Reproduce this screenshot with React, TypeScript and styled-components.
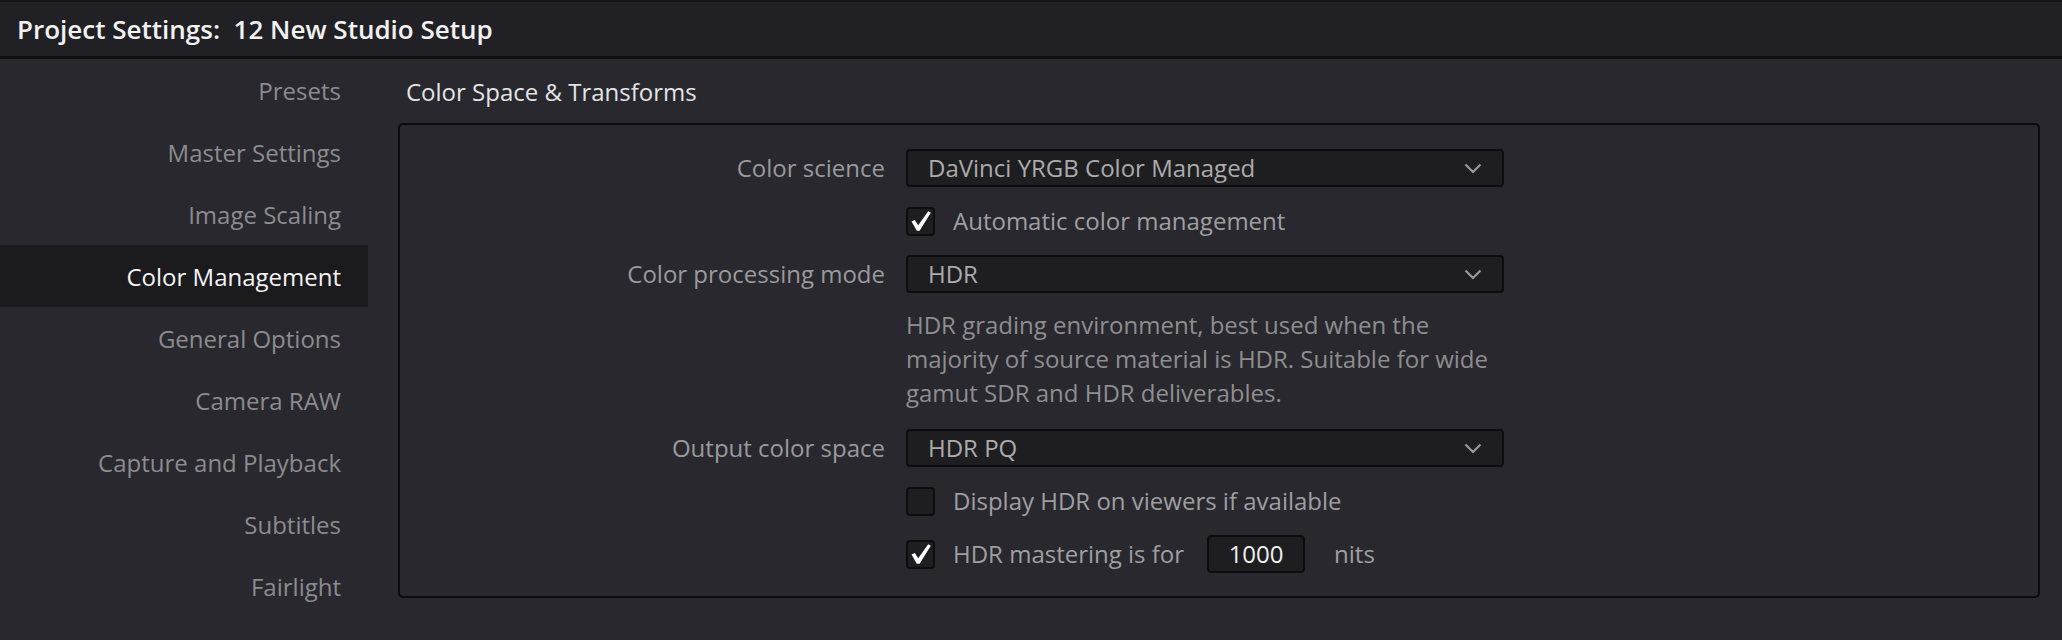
import styled, { createGlobalStyle } from 'styled-components'

const GlobalStyle = createGlobalStyle`
    html, body {
        margin: 0;
        padding: 0;
        background: #28282e;
    }
    body {
        font-family: 'Open Sans', 'Noto Sans', sans-serif;
        -webkit-font-smoothing: antialiased;
    }
`

const Window = styled.div`
    width: 2062px;
    height: 640px;
    overflow: hidden;
    display: flex;
    flex-direction: column;
    background: #28282e;
`

const TitleBar = styled.div`
    height: 54px;
    flex-shrink: 0;
    display: flex;
    align-items: center;
    padding-left: 17px;
    background: #212125;
    border-top: 2px solid #141416;
    border-bottom: 3px solid #0e0e10;
    color: #f2f2f2;
    font-size: 26px;
    font-weight: 600;
    white-space: pre;
`

const Body = styled.div`
    display: flex;
    flex: 1;
    min-height: 0;
`

const Sidebar = styled.nav`
    width: 368px;
    flex-shrink: 0;
    display: flex;
    flex-direction: column;
`

const NavItem = styled.div<{ active?: boolean }>`
    height: 62px;
    display: flex;
    align-items: center;
    justify-content: flex-end;
    padding-right: 27px;
    font-size: 24px;
    color: ${({ active }) => (active ? '#f4f4f4' : '#8c8c8e')};
    background: ${({ active }) => (active ? '#1b1b1e' : 'transparent')};
`

const Content = styled.main`
    flex: 1;
    padding: 0 22px 0 30px;
    display: flex;
    flex-direction: column;
`

const SectionTitle = styled.div<{ spaced?: boolean }>`
    height: ${({ spaced }) => (spaced ? '62px' : '64px')};
    flex-shrink: 0;
    display: flex;
    align-items: center;
    padding-left: 8px;
    margin-top: ${({ spaced }) => (spaced ? '21px' : '0')};
    font-size: 24px;
    color: #e4e4e6;
`

const Panel = styled.section`
    flex-shrink: 0;
    border: 2px solid #0b0b0d;
    border-radius: 5px;
    padding: 24px 0 23px;
    display: flex;
    flex-direction: column;
    gap: 19px;
`

const Row = styled.div`
    display: grid;
    grid-template-columns: 485px 598px;
    column-gap: 21px;
    align-items: center;
`

const Label = styled.div`
    text-align: right;
    font-size: 24px;
    line-height: 30px;
    color: #9a9a9c;
    white-space: nowrap;
`

const Select = styled.div`
    height: 34px;
    display: flex;
    align-items: center;
    justify-content: space-between;
    padding: 0 20px 0 20px;
    background: #1e1e20;
    border: 2px solid #0d0d0f;
    border-radius: 4px;
    font-size: 24px;
    line-height: 30px;
    color: #ababad;
`

const Check = styled.label`
    display: flex;
    align-items: center;
    gap: 18px;
    font-size: 24px;
    line-height: 30px;
    color: #9f9fa1;
    white-space: nowrap;
`

const Box = styled.span`
    width: 25px;
    height: 25px;
    flex-shrink: 0;
    display: flex;
    align-items: center;
    justify-content: center;
    background: #1e1e20;
    border: 2px solid #0d0d0f;
    border-radius: 4px;
`

const Note = styled.p`
    margin: -4px 0 0;
    font-size: 24px;
    line-height: 34px;
    color: #8e8e90;
`

const NumberField = styled.span`
    width: 94px;
    height: 34px;
    margin-left: 5px;
    display: flex;
    align-items: center;
    justify-content: center;
    background: #1e1e20;
    border: 2px solid #0d0d0f;
    border-radius: 4px;
    color: #f0f0f0;
    font-size: 24px;
`

const Unit = styled.span`
    margin-left: 11px;
`

const Chevron = () => (
    <svg width="18" height="11" viewBox="0 0 18 11">
        <path d="M1.5 1.5 L9 9 L16.5 1.5" fill="none" stroke="#9a9a9c" strokeWidth="2.2" />
    </svg>
)

const Tick = () => (
    <svg width="23" height="23" viewBox="0 0 23 23">
        <path d="M2.5 11.5 L5.8 10 L9.2 15.2 L19.2 1.2 L21.8 2.8 L10.6 20.8 L7.8 20.8 Z" fill="#ffffff" />
    </svg>
)

const pages = [
    'Presets',
    'Master Settings',
    'Image Scaling',
    'Color Management',
    'General Options',
    'Camera RAW',
    'Capture and Playback',
    'Subtitles',
    'Fairlight',
]

function Dropdown({ value }: { value: string }) {
    return (
        <Select>
            <span>{value}</span>
            <Chevron />
        </Select>
    )
}

function Checkbox({ checked, children }: { checked?: boolean; children: React.ReactNode }) {
    return (
        <Check>
            <Box>{checked && <Tick />}</Box>
            {children}
        </Check>
    )
}

export default function App() {
    return (
        <Window>
            <GlobalStyle />
            <TitleBar>{'Project Settings:  12 New Studio Setup'}</TitleBar>
            <Body>
                <Sidebar>
                    {pages.map((p) => (
                        <NavItem key={p} active={p === 'Color Management'}>
                            {p}
                        </NavItem>
                    ))}
                </Sidebar>
                <Content>
                    <SectionTitle>Color Space &amp; Transforms</SectionTitle>
                    <Panel>
                        <Row>
                            <Label>Color science</Label>
                            <Dropdown value="DaVinci YRGB Color Managed" />
                        </Row>
                        <Row>
                            <span />
                            <Checkbox checked>Automatic color management</Checkbox>
                        </Row>
                        <Row>
                            <Label>Color processing mode</Label>
                            <Dropdown value="HDR" />
                        </Row>
                        <Row>
                            <span />
                            <Note>
                                HDR grading environment, best used when the majority of source
                                material is HDR. Suitable for wide gamut SDR and HDR deliverables.
                            </Note>
                        </Row>
                        <Row>
                            <Label>Output color space</Label>
                            <Dropdown value="HDR PQ" />
                        </Row>
                        <Row>
                            <span />
                            <Checkbox>Display HDR on viewers if available</Checkbox>
                        </Row>
                        <Row>
                            <span />
                            <Checkbox checked>
                                HDR mastering is for
                                <NumberField>1000</NumberField>
                                <Unit>nits</Unit>
                            </Checkbox>
                        </Row>
                    </Panel>
                    <SectionTitle spaced>Dolby Vision™</SectionTitle>
                </Content>
            </Body>
        </Window>
    )
}
